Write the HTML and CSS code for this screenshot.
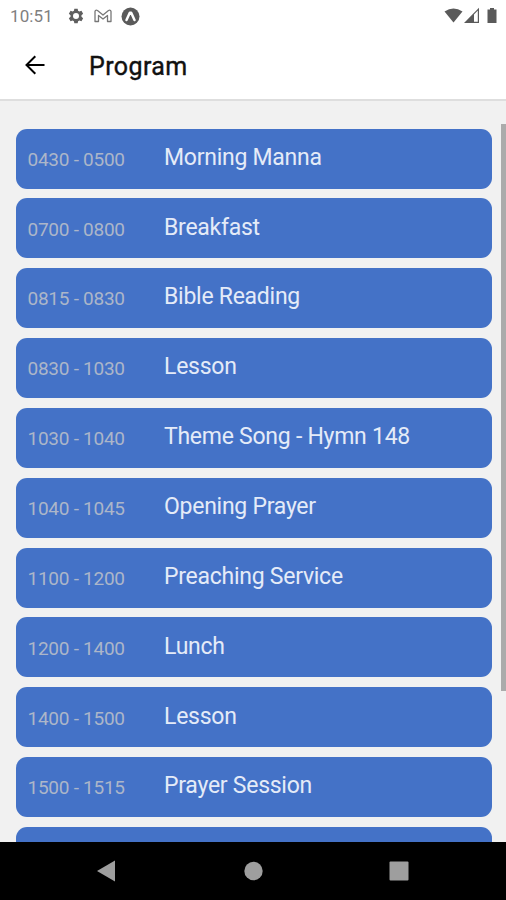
FILE: index.html
```html
<!DOCTYPE html>
<html lang="en">
<head>
  <meta charset="UTF-8"/>
  <meta name="viewport" content="width=device-width, initial-scale=1.0"/>
  <title>Program</title>
  <link rel="stylesheet" href="styles.css">
</head>
<body>
  <div class="statusbar">
    <span class="clock">10:51</span>
    <svg class="gear" width="16" height="16" viewBox="0 0 24 24"><path fill="#5f5f5f" fill-rule="evenodd" d="M9.500 1h5l.6 3.200 2 1.200 3.100-1.100 2.500 4.300-2.500 2.200v2.400l2.500 2.200-2.500 4.300-3.100-1.100-2 1.200-.6 3.200h-5l-.6-3.200-2-1.200-3.100 1.100-2.500-4.300 2.500-2.200v-2.400L1.300 8.600l2.500-4.300 3.100 1.100 2-1.200zM12 7.500a4.500 4.500 0 1 0 0 9 4.500 4.500 0 1 0 0-9z"/></svg>
    <svg class="mail" width="18" height="14" viewBox="0 0 18 14"><path fill="none" stroke="#777" stroke-width="1.300" stroke-linejoin="round" d="M1 12.500V2.500Q1.500.500 3.500 1.500L9 6l5.500-4.500Q16.500.500 17 2.500v10h-3.500V6.500L9 10 4.500 6.500v6z"/></svg>
    <svg class="expo" width="19" height="19" viewBox="0 0 19 19"><circle cx="9.500" cy="9.500" r="9" fill="#5a5a5a"/><path fill="none" stroke="#fff" stroke-width="2.500" stroke-linecap="round" stroke-linejoin="round" d="M5.500 13 8.800 5.800h1.400L13.500 13"/></svg>
    <svg class="signals" width="56" height="18" viewBox="0 0 56 18"><path fill="#5a5a5a" d="M.5 4.500Q9.500-1.500 18.500 4.500L9.500 15.500z"/><path fill="#5a5a5a" d="M20.500 16 30 6.500V16z"/><path fill="none" stroke="#5a5a5a" stroke-width="1.200" d="M21.500 15.400 34.400 2.200v13.200z"/><path fill="#5a5a5a" d="M46 1h4v1.500h2.500V16h-9V2.500H46z"/></svg>
  </div>
  <div class="header">
    <svg width="20" height="20" viewBox="0 0 20 20"><path fill="none" stroke="#000" stroke-width="2" d="M19.500 10H2M10.300 1.200 1.500 10l8.800 8.800"/></svg>
    <h1>Program</h1>
  </div>
  <div class="content">
    <ul class="program">
      <li><span class="time">0430 - 0500</span><span class="title">Morning Manna</span></li>
      <li><span class="time">0700 - 0800</span><span class="title">Breakfast</span></li>
      <li><span class="time">0815 - 0830</span><span class="title">Bible Reading</span></li>
      <li><span class="time">0830 - 1030</span><span class="title">Lesson</span></li>
      <li><span class="time">1030 - 1040</span><span class="title">Theme Song - Hymn 148</span></li>
      <li><span class="time">1040 - 1045</span><span class="title">Opening Prayer</span></li>
      <li><span class="time">1100 - 1200</span><span class="title">Preaching Service</span></li>
      <li><span class="time">1200 - 1400</span><span class="title">Lunch</span></li>
      <li><span class="time">1400 - 1500</span><span class="title">Lesson</span></li>
      <li><span class="time">1500 - 1515</span><span class="title">Prayer Session</span></li>
      <li></li>
    </ul>
    <div class="scrollbar"></div>
  </div>
  <div class="navbar">
    <svg width="20" height="22" viewBox="0 0 20 22"><path fill="#9e9e9e" d="M19 .5v21L1 11z"/></svg>
    <svg width="20" height="20" viewBox="0 0 20 20"><circle cx="10.500" cy="10" r="9.200" fill="#9e9e9e"/></svg>
    <svg width="20" height="20" viewBox="0 0 20 20"><rect x=".5" y=".5" width="19" height="19" rx="1" fill="#9e9e9e"/></svg>
  </div>
</body>
</html>
```
FILE: styles.css
```css
* { box-sizing: border-box; }
body { margin: 0; height: 900px; display: flex; flex-direction: column; overflow: hidden; font-family: Roboto, sans-serif; background-color: #f1f1f1; }
svg { display: block; flex: none; }

.statusbar { height: 32px; flex: none; display: flex; align-items: center; padding: 0 8px 0 10px; background-color: #fff; }
.clock { width: 58px; font-size: 17px; letter-spacing: 0.1px; color: #808080; }
.mail { margin-left: 10px; }
.expo { margin-left: 9px; }
.signals { margin-left: auto; margin-right: -2px; }

.header { height: 69px; flex: none; display: flex; align-items: center; padding: 0 25px 1px; background-color: #fff; border-bottom: 2px solid #dedede; }
.header h1 { margin: 2px 0 0 44px; font-size: 25px; font-weight: 400; letter-spacing: 0.4px; color: #111; -webkit-text-stroke: 0.4px #111; }

.content { flex: 1; min-height: 0; position: relative; overflow: hidden; }
.program { list-style-type: none; margin: 0; padding: 27.5px 14px 0 15.5px; display: flex; flex-direction: column; gap: 9.85px; }
.program li { height: 60px; flex: none; display: flex; align-items: flex-start; padding: 0 12px; background-color: #4472c7; border-radius: 11px; }
.time { width: 136.5px; padding-top: 19.3px; font-size: 19px; line-height: 24px; letter-spacing: -0.26px; color: #acb6c9; }
.title { padding-top: 15.3px; font-size: 23px; line-height: 28px; letter-spacing: -0.26px; color: #e4ebf8; }
.scrollbar { position: absolute; top: 23px; right: 0; width: 5px; height: 567px; background-color: #ababab; }

.navbar { height: 58px; flex: none; display: flex; justify-content: space-between; align-items: center; padding: 0 97px 0 96px; background-color: #000; }
```
